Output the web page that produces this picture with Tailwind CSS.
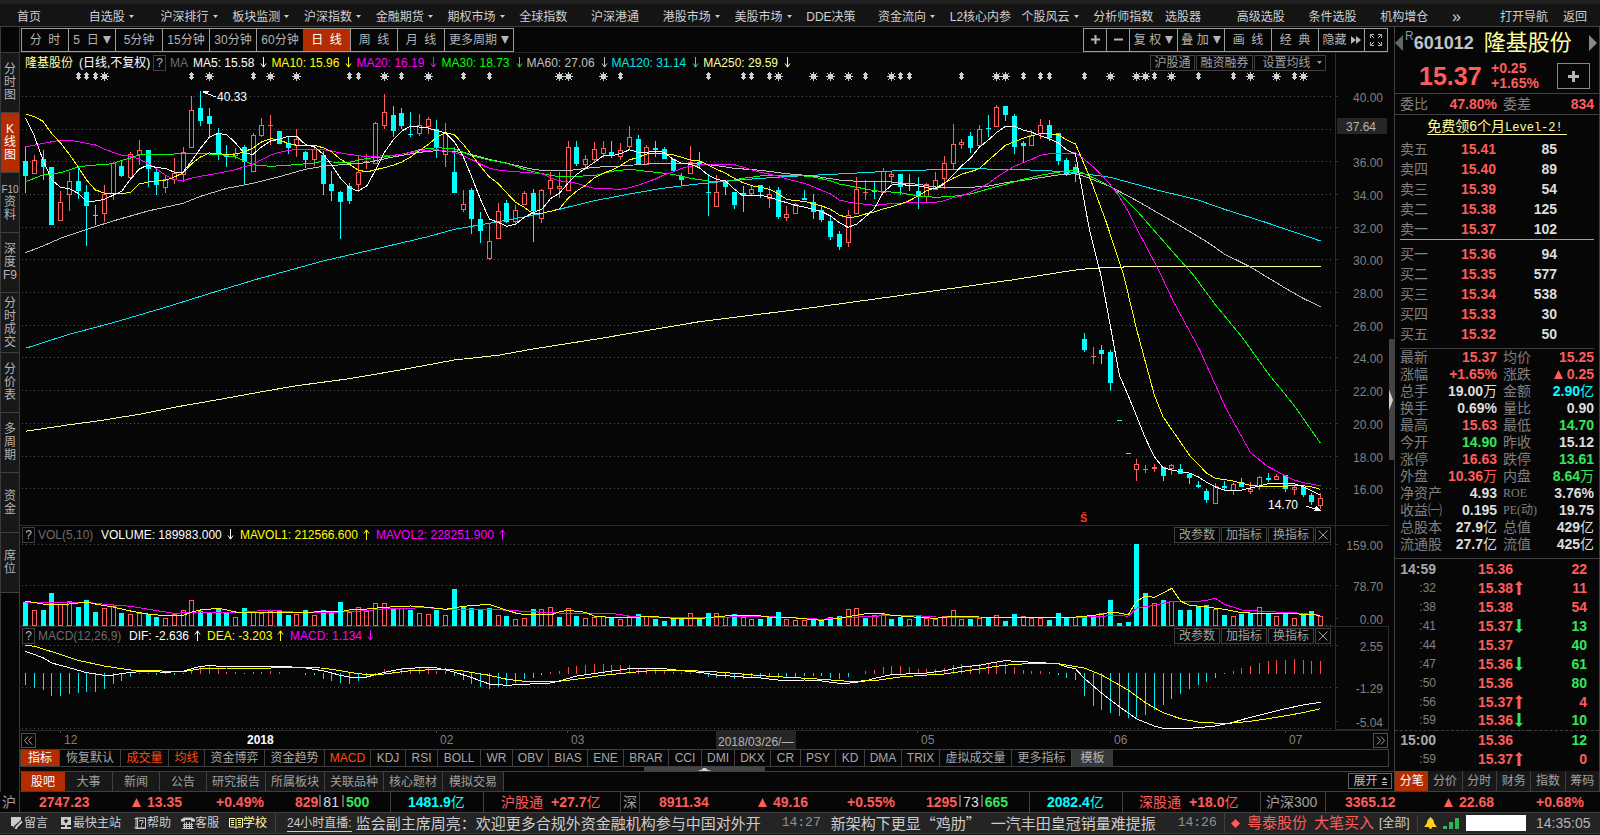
<!DOCTYPE html>
<html lang="zh-CN">
<head>
<meta charset="utf-8">
<title>隆基股份 601012</title>
<script src="https://cdn.jsdelivr.net/npm/@tailwindcss/browser@4"></script>
</head>
<body class="bg-[#060606] text-[#b4b4b4] font-['Liberation_Sans','Noto_Sans_CJK_SC',sans-serif] text-[12px] leading-[16px] overflow-hidden">
<svg class="hidden">
  <symbol id="dn" viewBox="0 0 7 11"><path d="M3.5 0V10M1 6.5 3.5 10.2 6 6.5" fill="none" stroke="currentColor"/></symbol>
  <symbol id="up" viewBox="0 0 7 11"><path d="M3.5 11V1M1 4.5 3.5 .8 6 4.5" fill="none" stroke="currentColor"/></symbol>
  <symbol id="caret" viewBox="0 0 5 3"><path d="M0 0H5L2.5 3Z" fill="currentColor"/></symbol>
  <symbol id="tri" viewBox="0 0 9 9"><path d="M0 0H9L4.500 9Z" fill="currentColor"/></symbol>
  <symbol id="rise" viewBox="0 0 9 9"><path d="M0 9H9L4.500 0Z" fill="currentColor"/></symbol>
</svg>
<div class="flex min-h-screen flex-col">
  <div class="h-1 bg-[#222222]"></div>
  <nav class="flex h-[23px] items-center border-b border-[#404040] bg-[#141414] pl-[17px] pt-[3px] text-[#cfcfcf] whitespace-nowrap">
    <div id="menu" class="flex min-w-0 flex-1"></div>
    <button class="w-12 text-left text-[16px]">»</button>
    <a href="#" class="w-[63px]">打开导航</a>
    <a href="#" class="w-[37px]">返回</a>
  </nav>

  <main class="flex h-[744px]">
    <aside class="w-5 shrink-0 border-x border-[#3a3a3a] pt-[25px]">
      <div id="side" class="flex flex-col border-t border-[#3a3a3a] text-center text-[12px] leading-[13px]"></div>
    </aside>

    <section class="flex min-w-0 flex-1 flex-col">
      <div class="flex h-[26px] shrink-0 items-center border-b border-[#222222] pl-px pr-px whitespace-nowrap">
        <div id="periods" class="flex h-6 border border-[#9c9c9c]"></div>
        <div class="ml-auto flex h-6 divide-x divide-[#9c9c9c] border border-[#9c9c9c]">
          <button class="flex w-[23px] items-center justify-center" aria-label="放大"><svg class="size-[9px]" viewBox="0 0 9 9"><path d="M0 4.500H9M4.500 0V9" stroke="#b4b4b4" stroke-width="2"/></svg></button>
          <button class="flex w-[23px] items-center justify-center" aria-label="缩小"><svg class="size-[9px]" viewBox="0 0 9 9"><path d="M0 4.500H9" stroke="#b4b4b4" stroke-width="2"/></svg></button>
          <button class="flex w-12 items-center justify-center gap-1">复&nbsp;权<svg class="size-2"><use href="#tri"/></svg></button>
          <button class="flex w-[47px] items-center justify-center gap-1">叠&nbsp;加<svg class="size-2"><use href="#tri"/></svg></button>
          <button class="w-[47px]">画&nbsp; 线</button>
          <button class="w-[47px]">经&nbsp; 典</button>
          <button class="flex w-[46px] items-center justify-center gap-1">隐藏<svg class="h-2 w-[10px]" viewBox="0 0 10 8"><path d="M0 0 5 4 0 8ZM5 0 10 4 5 8Z" fill="#b4b4b4"/></svg></button>
          <button class="flex w-[22px] items-center justify-center" aria-label="全屏"><svg class="size-3" viewBox="0 0 12 12"><path d="M.5 4V.5H4M8 .5H11.500V4M11.500 8V11.500H8M4 11.500H.5V8M1 1 4 4M11 1 8 4M11 11 8 8M1 11 4 8" fill="none" stroke="#b4b4b4"/></svg></button>
        </div>
      </div>

      <!-- price panel -->
      <div class="flex h-[473px] shrink-0 border-b border-[#2a2a2a]">
        <div class="flex min-w-0 flex-1 flex-col">
          <div class="flex h-[19px] items-center pl-[5px] pr-[9px] whitespace-nowrap">
            <h1 class="w-[54px] text-[#ffffa0]">隆基股份</h1><span class="w-[74px] text-white">(日线,不复权)</span>
            <button class="mr-1 h-4 w-[13px] border border-[#404040] leading-[14px]">?</button><span class="w-[23px] text-[#6c6c6c]">MA</span>
            <div id="ma" class="flex gap-1"></div>
            <div class="ml-auto flex gap-px text-[#a0a0a0]">
              <button class="h-4 w-[45px] border border-[#404040] leading-[14px]">沪股通</button>
              <button class="h-4 w-[57px] border border-[#404040] leading-[14px]">融资融券</button>
              <button class="flex h-4 w-[72px] items-center justify-center gap-1.5 border border-[#404040] pl-1 leading-[14px]">设置均线<svg class="h-[3px] w-[5px]"><use href="#caret"/></svg></button>
            </div>
          </div>
          <svg id="price" class="h-[453px] w-full" viewBox="20 72 1315 453" preserveAspectRatio="none" shape-rendering="crispEdges"></svg>
        </div>
        <svg id="priceAxis" class="h-full w-[54px] border-l border-[#2a2a2a]" viewBox="1336 53 53 472"></svg>
      </div>

      <!-- volume panel -->
      <div class="flex h-[101px] shrink-0 border-b border-[#2a2a2a]">
        <div class="flex min-w-0 flex-1 flex-col">
          <div class="flex h-[17px] items-center pl-[2px] pr-1 whitespace-nowrap">
            <button class="mr-[3px] h-4 w-[13px] border border-[#404040] leading-[14px]">?</button><span class="w-[63px] text-[#6c6c6c]">VOL(5,10)</span>
            <span class="flex items-center gap-[5px] text-white w-[139px]">VOLUME: 189983.000<svg class="h-[11px] w-[7px]"><use href="#dn"/></svg></span>
            <span class="flex items-center gap-[5px] text-[#ffff00] w-[136px]">MAVOL1: 212566.600<svg class="h-[11px] w-[7px]"><use href="#up"/></svg></span>
            <span class="flex items-center gap-[5px] text-[#ff00ff]">MAVOL2: 228251.900<svg class="h-[11px] w-[7px]"><use href="#up"/></svg></span>
            <div class="ml-auto flex gap-px text-[#a0a0a0]">
              <button class="h-4 w-[46px] border border-[#404040] leading-[14px]">改参数</button>
              <button class="h-4 w-[46px] border border-[#404040] leading-[14px]">加指标</button>
              <button class="h-4 w-[46px] border border-[#404040] leading-[14px]">换指标</button>
              <button class="flex h-4 w-4 items-center justify-center border border-[#404040]" aria-label="关闭"><svg class="size-[10px]" viewBox="0 0 10 10"><path d="M.5.5 9.500 9.500M9.500.5.5 9.500" stroke="#a0a0a0"/></svg></button>
            </div>
          </div>
          <svg id="vol" class="h-[83px] w-full" viewBox="20 543 1315 83" preserveAspectRatio="none" shape-rendering="crispEdges"></svg>
        </div>
        <svg id="volAxis" class="h-full w-[54px] border-l border-[#2a2a2a]" viewBox="1336 526 53 100"></svg>
      </div>

      <!-- MACD panel -->
      <div class="flex h-[104px] shrink-0 border-b border-[#2a2a2a]">
        <div class="flex min-w-0 flex-1 flex-col">
          <div class="flex h-[17px] items-center pl-[2px] pr-1 whitespace-nowrap">
            <button class="mr-[3px] h-4 w-[13px] border border-[#404040] leading-[14px]">?</button><span class="w-[91px] text-[#6c6c6c]">MACD(12,26,9)</span>
            <span class="flex items-center gap-[5px] text-white w-[78px]">DIF: -2.636<svg class="h-[11px] w-[7px]"><use href="#up"/></svg></span>
            <span class="flex items-center gap-[5px] text-[#ffff00] w-[83px]">DEA: -3.203<svg class="h-[11px] w-[7px]"><use href="#up"/></svg></span>
            <span class="flex items-center gap-[5px] text-[#ff00ff]">MACD: 1.134<svg class="h-[11px] w-[7px]"><use href="#dn"/></svg></span>
            <div class="ml-auto flex gap-px text-[#a0a0a0]">
              <button class="h-4 w-[46px] border border-[#404040] leading-[14px]">改参数</button>
              <button class="h-4 w-[46px] border border-[#404040] leading-[14px]">加指标</button>
              <button class="h-4 w-[46px] border border-[#404040] leading-[14px]">换指标</button>
              <button class="flex h-4 w-4 items-center justify-center border border-[#404040]" aria-label="关闭"><svg class="size-[10px]" viewBox="0 0 10 10"><path d="M.5.5 9.500 9.500M9.500.5.5 9.500" stroke="#a0a0a0"/></svg></button>
            </div>
          </div>
          <svg id="macd" class="h-[86px] w-full" viewBox="20 644 1315 86" preserveAspectRatio="none" shape-rendering="crispEdges"></svg>
        </div>
        <svg id="macdAxis" class="h-full w-[54px] border border-t-0 border-[#2a2a2a]" viewBox="1336 627 52 102"></svg>
      </div>

      <div class="flex h-[18px] shrink-0 items-center">
        <button class="ml-px flex h-[15px] w-[15px] shrink-0 items-center justify-center border border-[#505050]" aria-label="向左"><svg class="size-[9px]" viewBox="0 0 9 9"><path d="M4 .5.5 4.500 4 8.500M8 .5 4.500 4.500 8 8.500" fill="none" stroke="#a0a0a0"/></svg></button>
        <svg id="dates" class="h-[18px] min-w-0 flex-1" viewBox="36 731 1337 18" preserveAspectRatio="none"></svg>
        <button class="mr-px flex h-[15px] w-[15px] shrink-0 items-center justify-center border border-[#505050]" aria-label="向右"><svg class="size-[9px]" viewBox="0 0 9 9"><path d="M1 .5 4.500 4.500 1 8.500M5 .5 8.500 4.500 5 8.500" fill="none" stroke="#a0a0a0"/></svg></button>
      </div>
      <div id="indicators" class="flex h-[18px] shrink-0 divide-x divide-[#404040] border border-[#404040] whitespace-nowrap"></div>
      <div class="flex h-[4px] shrink-0 justify-center">
        <button class="flex h-[5px] w-[121px] items-end justify-center bg-[#444444]" aria-label="调整高度"><svg class="h-1 w-[19px]" viewBox="0 0 19 4"><path d="M0 4 7 1.500 8 0H11L12 1.500 19 4Z" fill="#d0d0d0"/></svg></button>
      </div>
    </section>

    <div class="relative w-[5px] shrink-0"><button class="absolute top-[312px] flex h-[121px] w-[5px] items-center bg-[#444444]" aria-label="收起侧栏"><svg class="h-5 w-1" viewBox="0 0 4 20"><path d="M0 0 1 2 4 10 1 18 0 20Z" fill="#d0d0d0"/></svg></button></div>

    <aside class="w-[206px] shrink-0 border-x border-[#404040] text-[14px]">
      <div class="h-[67px] border-b border-[#404040]">
        <div class="flex h-8 items-center">
          <svg class="h-4 w-2" viewBox="0 0 8 16"><path d="M8 0V16L0 8Z" fill="#666666"/></svg>
          <span class="ml-[2px] self-start pt-px text-[12px] text-[#8a9aaa]">R</span>
          <span class="w-[70px] text-[18px] font-bold text-[#c0c4c8]">601012</span>
          <h2 class="flex-1 text-[22px] leading-8 text-[#ffffa0] whitespace-nowrap">隆基股份</h2>
          <svg class="mr-[2px] h-4 w-2" viewBox="0 0 8 16"><path d="M0 0V16L8 8Z" fill="#888888"/></svg>
        </div>
        <div class="flex h-[34px] items-center pl-6 font-bold text-[#ff5c5c]">
          <span class="w-[72px] text-[25px]">15.37</span>
          <span class="w-[66px] text-[14px] leading-[15px]">+0.25<br>+1.65%</span>
          <button class="flex h-[26px] w-[33px] items-center justify-center border border-[#8a8a8a]" aria-label="加自选"><svg class="size-[11px]" viewBox="0 0 11 11"><path d="M0 5.500H11M5.500 0V11" stroke="#b4b4b4" stroke-width="3"/></svg></button>
        </div>
      </div>
      <div class="flex h-[21px] items-center border-b border-[#404040] pr-[5px] pl-[5px] text-[#808080]">
        <span class="w-9">委比</span><b class="w-[61px] text-right text-[#ff5c5c]">47.80%</b><span class="ml-1.5">委差</span><b class="ml-auto text-[#ff5c5c]">834</b>
      </div>
      <p class="h-[24px] text-center leading-[22px] text-[#ffffa0]"><a href="#" class="border-b border-[#ffffa0] pr-1">免费领6个月<span class="font-['Liberation_Mono'] text-[12px]">Level-2!</span></a></p>
      <div class="px-[5px]">
        <table class="w-full border-b border-[#a0a0a0]"><tbody id="asks"></tbody></table>
        <table class="mt-1 w-full"><tbody id="bids"></tbody></table>
        <table class="mt-1 w-full border-t border-[#404040]"><tbody id="stats"></tbody></table>
      </div>
      <div class="mt-1.5 border-t border-[#404040]">
        <table class="w-full"><tbody id="ticks"></tbody></table>
      </div>
    </aside>
  </main>

  <div class="flex h-[21px] whitespace-nowrap">
    <div class="w-5 border-x border-[#3a3a3a]"></div>
    <div id="tabs" class="flex flex-1 border-t border-b border-[#404040] pl-px text-[#a0a0a0]"></div>
    <div class="w-[46px] border-y border-[#404040] pt-px"><button class="flex h-4 w-[44px] items-center justify-center gap-1 border border-[#606060] text-[#c0c0c0]">展开<svg class="h-2 w-[5px]" viewBox="0 0 5 8"><path d="M0 3H5L2.500 0ZM0 5H5V6H0ZM0 7H5V8H0Z" fill="#c0c0c0"/></svg></button></div>
    <div id="rtabs" class="flex w-[206px] border-b border-l border-[#404040] text-[#a0a0a0]"></div>
  </div>

  <div class="flex h-[21px] items-center divide-x divide-[#404040] border-b border-[#404040] text-[14px] leading-5 font-bold text-[#ff5c5c] whitespace-nowrap">
    <div class="basis-[20px] grow-0 shrink-0 pl-[2px] font-normal text-[#a0a0a0]">沪</div>
    <div class="flex grow basis-[371px] items-center pl-[19px]"><span class="w-[93px]">2747.23</span><span class="flex w-[84px] items-center gap-1.5"><svg class="size-[9px]"><use href="#rise"/></svg>13.35</span><span class="w-[79px]">+0.49%</span><span>829<i class="mx-px inline-block h-3 w-[2px] bg-[#606060]"></i><i class="mx-px font-normal not-italic text-[#dddddd]">81</i><i class="mx-[2px] inline-block h-3 w-[2px] bg-[#606060]"></i><i class="not-italic text-[#32e65a]">500</i></span></div>
    <div class="grow basis-[93px] pl-[17px] text-[#00ffff]">1481.9<span class="font-normal">亿</span></div>
    <div class="grow basis-[137px] pl-[17px]"><span class="mr-2 font-normal">沪股通</span>+27.7<span class="font-normal">亿</span></div>
    <div class="basis-[19px] grow-0 shrink-0 pl-[2px] font-normal text-[#a0a0a0]">深</div>
    <div class="flex grow basis-[390px] items-center pl-[19px]"><span class="w-[99px]">8911.34</span><span class="flex w-[89px] items-center gap-1.5"><svg class="size-[9px]"><use href="#rise"/></svg>49.16</span><span class="w-[79px]">+0.55%</span><span>1295<i class="mx-[2px] inline-block h-3 w-[2px] bg-[#606060]"></i><i class="font-normal not-italic text-[#dddddd]">73</i><i class="mx-[2px] inline-block h-3 w-[2px] bg-[#606060]"></i><i class="not-italic text-[#32e65a]">665</i></span></div>
    <div class="grow basis-[93px] pl-[17px] text-[#00ffff]">2082.4<span class="font-normal">亿</span></div>
    <div class="grow basis-[138px] pl-[16px]"><span class="mr-2 font-normal">深股通</span>+18.0<span class="font-normal">亿</span></div>
    <div class="grow basis-[65px] pl-[5px] font-normal text-[#a0a0a0]">沪深300</div>
    <div class="flex grow basis-[274px] items-center pl-[19px]"><span class="w-[99px]">3365.12</span><span class="flex w-[92px] items-center gap-1.5"><svg class="size-[9px]"><use href="#rise"/></svg>22.68</span><span>+0.68%</span></div>
  </div>

  <footer class="flex h-[21px] items-center border-b border-[#3a3a3a] bg-[#242424] pl-[10px] text-[#cccccc] whitespace-nowrap">
    <a href="#" class="flex w-[50px] items-center gap-px"><svg class="h-3 w-[13px]" viewBox="0 0 13 12"><path d="M1 0H11V3L4 9V11L3 9H1Z" fill="#ccc"/><path d="M6 10.500 12 4.500M5 11.500 7 11" stroke="#ccc" stroke-width="2"/></svg>留言</a>
    <a href="#" class="flex w-[74px] items-center gap-px"><svg class="size-3" viewBox="0 0 12 12"><path d="M1 0H11V8H7V10H11V12H1V10H5V8H1Z" fill="#ccc"/><path d="M6 1.500V5M4 3 6 6 8 3" stroke="#242424" fill="#242424"/></svg>最快主站</a>
    <a href="#" class="flex w-[47px] items-center gap-px"><svg class="size-3" viewBox="0 0 12 12"><path d="M2 1H11.500V11.500H2ZM3.500 1V11M.500 1.500H3M.500 11H11" fill="none" stroke="#ccc"/><path d="M5.500 4.500V3.500H9V5.500L7.500 6.500V8M7.500 9V10" fill="none" stroke="#ccc"/></svg>帮助</a>
    <a href="#" class="flex w-[48px] items-center"><svg class="h-3 w-[14px]" viewBox="0 0 14 12"><path d="M0 4.500V2.500L3 .5H11L14 2.500V4.500H10V3H4V4.500Z" fill="#ccc"/><path d="M3.500 5.500V12M5.500 5V12M8.500 5V12M10.500 5.500V12M2 7.500H12M2 9.500H12M1.500 11.500H12.500" stroke="#ccc"/></svg>客服</a>
    <a href="#" class="flex w-[46px] items-center text-[#ffffa0]"><svg class="h-3 w-[14px]" viewBox="0 0 14 12"><path d="M.5 1.500H6L7 2.500 8 1.500H13.500V10H8.500L7 11.500 5.500 10H.500ZM7 2.500V11M2 3.500H5M2 5.500H5M2 7.500H5M9 3.500H12M9 5.500H12M9 7.500H12" fill="none" stroke="#ffffa0"/></svg>学校</a>
    <div class="flex min-w-0 flex-1 items-center border-l border-[#404040] pl-[11px]">
      <a href="#" class="mr-1 shrink-0 border-b border-[#cccccc] leading-[16px]">24小时直播:</a>
      <p class="flex min-w-0 flex-1 items-center overflow-hidden font-['Noto_Sans_CJK_SC',sans-serif] text-[15px] leading-5"><span class="w-[426px] shrink-0">监会副主席周亮：欢迎更多合规外资金融机构参与中国对外开</span><time class="w-[49px] shrink-0 font-['Liberation_Mono'] text-[13px] text-[#909090]">14:27</time><span class="w-[160px] shrink-0">新架构下更显“鸡肋”</span><span class="w-[187px] shrink-0">一汽丰田皇冠销量难提振</span><time class="font-['Liberation_Mono'] text-[13px] text-[#909090]">14:26</time></p>
    </div>
    <div class="flex w-[193px] items-center border-l border-[#404040] pl-[6px] text-[15px] leading-5 text-[#ff5c5c]"><svg class="mr-[7px] size-[9px]" viewBox="0 0 9 9"><path d="M4.500 0 9 4.500 4.500 9 0 4.500Z" fill="#ff5c5c"/></svg><span class="w-[67px]">粤泰股份</span><span class="w-[65px]">大笔买入</span><span class="text-[12px] text-[#cccccc]">[全部]</span></div>
    <div class="flex w-[183px] items-center border-l border-[#404040] pl-[6px]">
      <svg class="h-3 w-[13px]" viewBox="0 0 13 12"><path d="M6.500 0 8 1.500Q10 2.500 10 6L12.500 9.500V10H8Q8 12 6.500 12T5 10H.500V9.500L3 6Q3 2.500 5 1.500Z" fill="#ffd21e"/></svg>
      <svg class="ml-1.5 h-[11px] w-[17px]" viewBox="0 0 17 11"><path d="M0 8H4V11H0ZM6 4H10V11H6ZM12 0H16V11H12Z" fill="#2fb457"/></svg>
      <input type="text" aria-label="搜索" class="ml-1.5 h-4 w-[60px] bg-white px-1 text-black">
      <time class="ml-[10px] text-[14px] text-[#b4b4b4]">14:35:05</time>
    </div>
  </footer>
  <div class="flex-1 bg-[#101318]"></div>
</div>

<script>
const $ = id => document.getElementById(id);
const RED = '#ff5c5c', CYAN = '#00ffff', GRID = '#555555';

// ---- navigation, tabs ----
const caret = '<svg class="h-[3px] w-[5px]"><use href="#caret"/></svg>';
$('menu').innerHTML = '首页,自选股+,沪深排行+,板块监测+,沪深指数+,金融期货+,期权市场+,全球指数,沪深港通,港股市场+,美股市场+,DDE决策,资金流向+,L2核心内参,个股风云+,分析师指数,选股器,高级选股,条件选股,机构增仓'
  .split(',').map(t => `<a href="#" class="flex flex-1 basis-0 items-center gap-1">${t.replace('+', '')}${t.includes('+') ? caret : ''}</a>`).join('');
$('side').innerHTML = ['分/时/图', 'K/线/图', '<span class="text-[10px]">F10</span>/资/料', '深/度/F9', '分/时/成/交', '分/价/表', '多/周/期', '资/金', '席/位'].map((t, i) =>
  `<button class="${i === 1 ? 'h-[60px] border-b border-[#404040] bg-[#b42d00] text-white' : 'h-[60px] border-b border-[#404040] bg-[#181818]'}">${t.replace(/\/(?!span)/g, '<br>')}</button>`).join('');
const tri = '<svg class="size-2"><use href="#tri"/></svg>';
$('periods').innerHTML = ['分&nbsp; 时', '5&nbsp; 日' + tri, '5分钟', '15分钟', '30分钟', '60分钟', '日&nbsp; 线', '周&nbsp; 线', '月&nbsp; 线', '更多周期' + tri].map((t, i) =>
  `<button class="${i === 6 ? 'flex w-[47px] items-center justify-center gap-1 bg-[#b42d00] text-white' : i === 9 ? 'flex w-[69px] items-center justify-center gap-1 border-l border-[#9c9c9c]' : i === 0 ? 'w-[46px]' : 'flex w-[47px] items-center justify-center gap-1 border-l border-[#9c9c9c]'}">${t}</button>`).join('');
$('ma').innerHTML = [['MA5: 15.58', '#ffffff'], ['MA10: 15.96', '#ffff00'], ['MA20: 16.19', '#ff00ff'], ['MA30: 18.73', '#00ff00'], ['MA60: 27.06', '#c0c0c0'], ['MA120: 31.14', '#00e5ee'], ['MA250: 29.59', '#ffffa0']]
  .map(([t, c]) => `<span class="flex items-center gap-1.5" style="color:${c}">${t}<svg class="h-[11px] w-[7px]"><use href="#dn"/></svg></span>`).join('');
const ind = [['指标',39],['恢复默认',61],['成交量',48],['均线',36],['资金博弈',60],['资金趋势',60],['MACD',46],['KDJ',35],['RSI',32],['BOLL',43],['WR',32],['OBV',36],['BIAS',39],['ENE',36],['BRAR',45],['CCI',33],['DMI',33],['DKX',36],['CR',30],['PSY',35],['KD',29],['DMA',37],['TRIX',38],['虚拟成交量',72],['更多指标',60],['模板',41]];
$('indicators').innerHTML = ind.map(([t, w], i) =>
  `<button class="${i === 0 ? 'bg-[#b42d00] text-white' : [2, 3, 6].includes(i) ? 'text-[#ff4a14]' : i === 25 ? 'bg-[#383838]' : 'text-[#a8a8a8]'}" style="width:${w}px">${t}</button>`).join('');
$('tabs').innerHTML = [['股吧',44],['大事',48],['新闻',47],['公告',47],['研究报告',59],['所属板块',59],['关联品种',59],['核心题材',59],['模拟交易',61]].map(([t, w], i) =>
  `<button class="${i ? 'border-r border-[#404040] bg-[#181818]' : 'bg-[#b42d00] text-white'}" style="width:${w}px">${t}</button>`).join('');
$('rtabs').innerHTML = ['分笔', '分价', '分时', '财务', '指数', '筹码'].map((t, i) =>
  `<button class="${i ? 'flex-1 border-r border-[#404040] bg-[#181818]' : 'flex-1 bg-[#b42d00] text-white'}">${t}</button>`).join('');

// ---- quote tables ----
const book = rows => rows.map(([n, p, q]) => `<tr class="h-5"><th scope="row" class="w-10 text-left font-normal text-[#808080]">${n}</th><td class="w-14 text-right font-bold text-[#ff5c5c]">${p}</td><td class="w-[61px] text-right font-bold text-[#dddddd]">${q}</td><td></td></tr>`).join('');
$('asks').innerHTML = book([['卖五','15.41',85],['卖四','15.40',89],['卖三','15.39',54],['卖二','15.38',125],['卖一','15.37',102]]);
$('bids').innerHTML = book([['买一','15.36',94],['买二','15.35',577],['买三','15.34',538],['买四','15.33',30],['买五','15.32',50]]);
const cls = { r: 'text-right font-bold text-[#ff5c5c]', g: 'text-right font-bold text-[#32e65a]', w: 'text-right font-bold text-[#dddddd]', c: 'text-right font-bold text-[#00ffff]' };
const unit = v => v.replace(/[万亿]/, '<span class="font-normal">$&</span>').replace('▲', '<svg class="mr-1 inline size-[9px]"><use href="#rise"/></svg>');
$('stats').innerHTML = [['最新','15.37','r','均价','15.25','r'],['涨幅','+1.65%','r','涨跌','▲0.25','r'],['总手','19.00万','w','金额','2.90亿','c'],['换手','0.69%','w','量比','0.90','w'],['最高','15.63','r','最低','14.70','g'],['今开','14.90','g','昨收','15.12','w'],['涨停','16.63','r','跌停','13.61','g'],['外盘','10.36万','r','内盘','8.64万','g'],['净资产','4.93','w','ROE','3.76%','w'],['收益㈠','0.195','w','PE(动)','19.75','w'],['总股本','27.9亿','w','总值','429亿','w'],['流通股','27.7亿','w','流值','425亿','w']]
  .map(([a, b, c, d, e, f]) => `<tr class="h-[17px] whitespace-nowrap"><th scope="row" class="w-10 text-left font-normal text-[#808080]">${a}</th><td class="w-[55px] ${cls[c]}">${unit(b)}</td><th scope="row" class="w-11 pl-1.5 text-left font-normal text-[#808080]">${/[A-Z]/.test(d) ? `<span class="font-['Liberation_Serif','Noto_Sans_CJK_SC'] text-[12px]">${d}</span>` : d}</th><td class="${cls[f]}">${unit(e)}</td></tr>`).join('');
const tick = { u: '<svg class="h-[14px] w-2" viewBox="0 0 8 14"><path d="M4 0 8 4H5.500V14H2.500V4H0Z" fill="#ff5c5c"/></svg>', d: '<svg class="h-[14px] w-2" viewBox="0 0 8 14"><path d="M4 14 8 10H5.500V0H2.500V10H0Z" fill="#32e65a"/></svg>', '': '' };
$('ticks').innerHTML = [['14:59','15.36','',22,'r'],[':32','15.38','u',11,'r'],[':38','15.38','',54,'r'],[':41','15.37','d',13,'g'],[':44','15.37','',40,'g'],[':47','15.36','d',61,'g'],[':50','15.36','',80,'g'],[':56','15.37','u',4,'r'],[':59','15.36','d',10,'g'],['15:00','15.36','',12,'g'],[':59','15.37','u',0,'r']]
  .map(([t, p, a, v, c], i) => `<tr class="${i === 9 ? 'h-[19px] border-t border-dashed border-[#404040]' : 'h-[19px]'}"><td class="${t.length > 3 ? 'w-[41px] text-right font-bold text-[#a8a8a8]' : 'w-[41px] text-right text-[12px] text-[#808080]'}">${t}</td><td class="w-[77px] text-right font-bold text-[#ff5c5c]">${p}</td><td class="w-4 pl-[2px]">${tick[a]}</td><td class="pr-3 ${cls[c]}">${v}</td></tr>`).join('');

// ---- charts: data y values are in thirds of a pixel ----
const X = i => Math.round(25 + 8.75 * i);
const Y = v => Math.round(v / 3);
const rect = (x, y, w, h, c) => `<rect x="${x}" y="${y}" width="${w}" height="${h}" fill="${c}"/>`;
const grid = ys => ys.map(y => `<line x1="22" x2="1332" y1="${y + .5}" y2="${y + .5}" stroke="${GRID}" stroke-dasharray="1 3"/>`).join('');
const box = (i, top, bot, red) => {
  const h = Math.max(1, bot - top), x = X(i) - 2;
  if (!red || h < 3) return rect(x, top, 5, h, red ? RED : CYAN);
  return `<rect x="${x + .5}" y="${top + .5}" width="4" height="${h - 1}" fill="none" stroke="${RED}"/>`;
};
const line = (pts, c, off = 0) => {
  const a = pts.trim().split(/\s+/).map(p => p.split(',').map(Number));
  return `<polyline fill="none" stroke="${c}" points="${a.map(([i, y]) => (25.5 + 8.75 * i).toFixed(1) + ',' + (off + y / 3).toFixed(1)).join(' ')}"/>`;
};

// colour high bodyTop bodyBottom low
const candles = `c438 483 527 578|r465 481 523 523|c450 477 500 540|c501 501 675 675|r573 607 664 664|r516 544 586 632|c505 543 572 597|c555 576 618 738|c615 645 648 675|r555 583 643 665|r487 490 582 600|c480 499 528 531|r456 461 535 535|r420 451 466 494|c450 450 507 560|c508 516 555 585|r528 538 563 578|r474 520 540 551|r441 455 526 545|r288 331 443 443|c273 324 363 377|c324 348 372 411|c384 399 465 480|c435 461 471 501|r444 458 469 477|c435 441 486 551|r399 406 515 515|r354 376 407 411|r345 376 379 434|c393 393 431 431|c408 428 444 461|r387 416 437 471|c453 456 480 504|r435 447 481 497|c453 465 552 585|c513 552 573 603|c573 576 606 717|c549 558 603 612|r465 517 554 575|r462 484 487 507|r366 370 491 491|r282 337 377 386|c318 345 393 411|c324 339 378 386|c336 402 405 411|r342 376 403 407|r351 358 382 402|c360 387 441 474|r370 400 464 500|c441 516 579 579|r570 613 629 636|c564 570 657 702|c636 657 693 729|r669 724 776 780|r609 634 716 716|c600 609 666 670|r615 631 665 672|r573 580 616 616|c567 579 634 726|r567 571 656 668|r516 541 566 585|r516 559 566 594|r423 442 572 572|c423 441 492 498|r465 478 496 504|r426 448 479 486|r423 445 461 475|c423 456 468 475|r429 451 472 479|r378 412 440 447|c405 417 492 492|r435 442 494 494|c423 444 450 470|c441 447 477 477|c477 477 513 513|c519 528 540 558|r438 487 521 521|c456 486 495 508|c522 576 579 648|r525 577 620 620|c540 543 560 585|c576 576 615 627|c558 580 587 636|r555 568 581 585|c555 555 576 594|r558 583 598 624|c561 570 651 657|r618 643 653 662|r610 613 641 641|c570 594 600 600|c582 606 636 657|c618 630 660 666|c648 663 711 720|c693 702 741 750|r630 646 728 741|r531 568 641 641|r540 576 579 600|c546 572 576 597|r504 514 578 578|r514 523 530 552|c522 522 561 585|c522 554 557 573|c531 573 588 627|r549 553 590 606|r516 541 569 569|r468 490 536 566|r372 433 491 507|r417 427 434 447|c396 408 444 459|r375 388 437 437|c345 384 387 411|r315 322 380 380|c318 318 345 363|c342 348 441 462|c423 429 438 486|r390 405 437 437|r357 376 402 417|c360 375 414 423|c399 399 483 495|c474 480 521 527|c492 501 519 546|c999 1017 1050 1056|r1041 1067 1070 1092|c1035 1050 1062 1092|c1050 1056 1149 1173|c1260 1260 1263 1263|c1359 1359 1362 1362|r1377 1393 1409 1443|r1395 1408 1411 1419|r1392 1402 1408 1416|c1401 1401 1428 1443|r1392 1396 1408 1425|c1392 1407 1422 1422|c1422 1422 1434 1452|c1443 1455 1461 1465|c1467 1473 1500 1509|r1449 1459 1511 1511|c1443 1458 1464 1473|r1449 1453 1474 1485|c1434 1446 1461 1461|r1446 1468 1475 1482|r1428 1432 1460 1470|c1419 1434 1440 1446|r1422 1429 1439 1439|c1425 1425 1467 1476|r1455 1462 1469 1485|c1458 1462 1485 1491|c1479 1485 1506 1515|r1480 1495 1517 1527`
  .split('|').map(s => [s[0] === 'r', ...s.slice(1).split(' ').map(Number)]);

let p = grid([96, 129, 161, 194, 227, 259, 292, 325, 357, 390, 423, 456, 488]);
candles.forEach(([red, h, t, b, l], i) => {
  const c = red ? RED : CYAN, x = X(i);
  if (t > h) p += rect(x, Y(h), 1, Y(t) - Y(h), c);
  if (l > b) p += rect(x, Y(b), 1, Y(l) - Y(b), c);
  p += box(i, Y(t), Y(b), red);
});
p += line('0,1294 5,1274 8,1264 13,1243 18,1217 22,1199 27,1175 31,1157 37,1136 43,1109 49,1080 54,1066 58,1047 65.5,1016 73.6,980 77,965 89,926 99,890 103.5,874 112.7,840 119,814 120.6,808 124,802 129,799 148,799', '#ffffa0');
p += line('0,1045 5,1003 10,968 16,922 21.5,877 26.4,838 34,783 40,747 46,710 49,688 53,670 58,646 61,628 64.7,604 69,582 72.5,566 76.5,553 81,541 86.7,530 94.5,520 99,513 108,506 114,509 119,515 120,518 124,532 129,568 134,600 137,628 141.7,667 148,723', '#00e5ee');
p += line('0,758 2,738 4,715 7,688 10,663 14,633 18,610 20,589 23,565 26,550 29,530 32,508 34,499 37,492 39,488 42,471 45,457 47,452 50,457 53,478 55,490 58,508 59,511 62,512 65,502 68,498 71,492 74,490 77,491 79,497 81,505 84,511 87,521 90,528 93,540 95,544 99,546 102,553 104,561 107,563 110,559 112,548 115,537 118,525 120,521 121,529 124,560 127,602 132,678 135,725 137,762 140,801 142,833 144,865 146,895 148,920', '#c0c0c0');
p += line('0,545 1,535 2,525 4,518 5,510 6,501 7,497 10,491 11,481 12,474 13,465 14,463 20,461 22,463 24,471 25,483 26,494 28,499 30,496 33,489 34,483 35,486 37,487 38,481 39,475 41,471 43,462 44,457 45,449 47,443 49,446 51,467 53,480 55,490 57,508 59,521 61,530 65,527 67,514 69,508 71,514 74,523 76,535 78,543 80,545 81,540 82,535 84,528 86,526 89,528 90,531 92,542 93,552 95,562 97,572 100,578 102,588 104,592 106,589 108,582 110,567 112,553 114,538 116,526 118,517 120,510 121,521 122,533 123,546 124,560 125,580 126,606 127,632 129,692 131,752 133.5,826 136,915 139,1010 142,1120 145,1217 148,1330', '#00ff00');
p += line('0,441 2,430 4,421 5,421 6,425 8,435 9,447 10,457 11,466 12,469 13,477 14,490 15,507 16,526 17,539 18,542 19,534 21,524 22,520 24,509 25,500 26,493 27,479 28,466 29,457 30,452 31,448 34,449 35,453 36,459 37,463 38,467 39,470 42,466 44,458 45,452 47,449 49,457 50,467 51,479 52,492 53,505 54,510 55,513 57,517 59,521 60,533 61,542 63,550 64,558 65,565 68,568 69,563 70,556 71,546 72,537 73,524 74,516 75,505 76,499 77,495 78,493 81,494 82,501 83,510 84,517 86,528 87,537 89,550 90,560 92,582 93,600 94,606 95,610 97,616 98,614 99,610 102,608 104,607 105,602 106,593 107,588 108,577 109,565 110,551 111,531 112,515 113,499 114,488 115,478 116,466 117,461 119,461 120,458 121,478 122,500 123,525 124,555 125,590 126,634 127,686 129.5,810 131.2,905 134.2,1050 137.1,1220 140,1358 142,1400 144,1427 145,1440 146,1448 148,1457', '#ff00ff');
p += line('0,341 1,350 2,364 3,401 4,429 5,463 6,500 7,541 8,570 9,579 10,579 11,581 12,577 13,552 14,546 15,543 16,541 17,531 18,519 19,491 20,471 21,459 22,460 23,464 24,462 25,456 26,444 27,425 28,416 29,420 30,430 31,436 33,436 34,443 35,456 36,478 37,493 38,510 39,516 40,509 41,503 42,496 43,486 44,471 45,452 46,434 47,412 48,398 49,404 50,432 51,465 52,499 53,531 54,550 55,579 56,607 57,622 58,641 59,640 60,634 61,627 62,595 63,573 64,556 65,534 66,520 67,510 68,497 69,480 70,472 71,462 72,459 73,461 74,464 75,472 76,480 77,483 78,495 79,508 80,520 81,535 82,548 83,557 84,562 85,568 86,581 87,598 88,602 89,604 90,611 91,618 92,628 93,645 94,653 95,650 96,642 97,636 98,627 99,620 100,612 101,602 102,588 103,572 104,564 105,549 106,535 107,522 108,515 109,506 110,482 111,459 112,436 113,425 114,415 115,407 116,401 117,401 118,404 119,420 120,432 121.6,530 123.5,665 125.5,825 127,990 129,1185 130,1250 133,1365 135,1420 136,1435 138,1443 140,1456 141,1459 144,1459 145,1456 146,1457 147,1461 148,1468', '#ffff00');
p += line('0,353 1,408 2,480 3,540 4,562 5,566 6,580 7,606 8,603 9,598 10,586 11,573 12,538 13,507 14,495 15,503 16,505 17,517 18,517 19,482 20,445 21,412 22,400 23,404 24,429 25,460 26,463 27,440 28,423 29,418 30,409 31,409 32,434 33,440 34,462 35,495 36,535 37,563 38,573 39,558 40,510 41,458 42,420 43,393 44,379 45,381 46,384 47,392 48,399 49,425 50,468 51,532 52,598 53,657 54,667 55,679 56,673 57,652 58,638 59,628 60,596 61,580 62,550 63,523 64,505 65,487 66,468 67,467 68,461 69,449 70,457 71,457 72,454 73,457 74,478 75,490 76,493 77,503 78,525 79,538 80,543 81,567 82,588 83,587 84,585 85,592 86,600 87,608 88,616 89,621 90,628 91,635 92,648 93,668 94,682 95,672 96,650 97,626 98,578 99,555 100,551 101,558 102,557 103,563 104,566 105,552 106,525 107,497 108,475 109,442 110,421 111,397 112,379 113,379 114,390 115,397 116,407 117,417 118,428 119,450 120,462 121.6,690 122.9,825 124,980 125,1125 126,1185 127,1250 128,1315 129,1370 130,1403 131,1410 132,1415 133,1419 134,1430 135,1447 136,1461 137,1470 138,1472 139,1470 140,1464 141,1458 142,1451 143,1449 144,1451 145,1451 146,1460 147,1472 148,1486', '#ffffff');
// event markers: diamonds and stars
[6,7,8,19,26,37,38,43,50,53,68,78,82,83,85,96,100,101,107,114,116,117,121,129,134,138,145].forEach(i => {
  const x = X(i); p += rect(x - 1, 73, 3, 6, '#d0d0d0') + rect(x, 72, 1, 8, '#d0d0d0') + rect(x - 2, 74, 5, 1, '#d0d0d0') + rect(x - 2, 77, 5, 1, '#d0d0d0');
});
[9,21,28,31,41,46,61,62,66,86,90,92,94,99,111,112,124,127,128,131,140,143,146].forEach(i => {
  const x = X(i); p += rect(x - 2, 74, 5, 5, '#d0d0d0') + rect(x, 72, 1, 9, '#d0d0d0') + rect(x - 4, 76, 9, 1, '#d0d0d0')
    + rect(x - 3, 73, 1, 1, '#d0d0d0') + rect(x + 3, 73, 1, 1, '#d0d0d0') + rect(x - 3, 79, 1, 1, '#d0d0d0') + rect(x + 3, 79, 1, 1, '#d0d0d0');
});
p += `<path d="M203 92 216 97M1306 506 1318 510" stroke="#fff"/><path d="M202 91H209L206 95ZM1321 511 1314 511 1316 506Z" fill="#fff"/>
<g font-size="12" fill="#fff"><text x="217" y="101">40.33</text><text x="1268" y="509">14.70</text></g><text x="1080" y="522" font-size="11" font-weight="bold" fill="#ff3a10">Ŝ</text>`;
$('price').innerHTML = p;

const labels = a => `<g font-size="12" fill="#808080" text-anchor="end">${a.map(([t, y]) => `<path d="M1336 ${y - 5.5}h2" stroke="#333"/><text x="1383" y="${y}">${t}</text>`).join('')}</g>`;
// the cursor price tag takes the place of the 38.00 label
$('priceAxis').innerHTML = labels([['40.00', 102], ['36.00', 167], ['34.00', 200], ['32.00', 233], ['30.00', 265], ['28.00', 298], ['26.00', 331], ['24.00', 363], ['22.00', 396], ['20.00', 429], ['18.00', 462], ['16.00', 494]])
  + rect(1337, 118, 50, 16, '#262626') + '<text x="1346" y="131" font-size="12" fill="#b4b4b4">37.64</text>';
$('volAxis').innerHTML = labels([['159.00', 550], ['78.70', 591], ['0.00', 624]]);
$('macdAxis').innerHTML = labels([['2.55', 651], ['-1.29', 693], ['-5.04', 727]]);

const vols = 'c246 r271 c270 c219 r253 r243 c261 c240 c276 r264 r259 c279 r283 r280 c282 c291 r295 r282 r271 r241 c273 c277 c264 c276 r292 c264 r276 r280 r274 c273 c285 r281 c270 r284 c270 c275 c246 r277 r262 r274 r250 r250 c264 r264 c270 r280 r283 c270 r286 c207 c258 c264 c267 c264 r286 c288 r298 r295 c267 r268 r262 c291 r265 c288 r295 r292 r289 c293 r296 r289 c282 r288 c297 c303 c295 c296 r280 c296 c279 r280 r292 c282 r292 r298 c297 c291 c276 r298 r301 r301 c297 c303 c291 c288 r268 r265 c293 r286 r283 c297 c292 r298 c287 r294 r298 r287 r271 r298 c297 r293 c293 r286 c303 c282 r288 r295 r294 c300 c279 c293 r290 c292 c290 r280 c240 c309 c306 c72 c219 r250 c240 r244 c270 c270 c258 c255 r267 c285 r289 c282 c279 r262 c279 r289 c282 r295 c285 c273 r289'.split(' ');
$('vol').innerHTML = grid([544, 585, 625]) + vols.map((s, i) => box(i, 520 + Y(+s.slice(1)), 626, s[0] === 'r')).join('')
  + line('0,247 7,247 9,253 12,259 15,272 17,280 20,276 24,278 28,270 31,277 36,276 39,272 41,266 43,265 46,263 48,268 54,269 57,274 60,278 62,280 67,280 69,288 72,292 77,293 84,289 89,295 91,298 93,294 96,290 99,286 102,287 104,291 119,293 122,290 125,286 126,289 127,264 129,256 131,244 134,244 135,241 136,235 137,253 139,270 142,275 145,278 148,286', '#ff00ff', 520)
  + line('0,243 2,252 5,252 7,246 8,252 10,261 12,273 14,282 16,287 18,286 19,276 20,270 22,265 23,270 24,276 28,276 30,277 36,275 37,270 39,267 41,262 44,258 46,262 48,268 49,264 50,259 53,253 54,262 56,279 57,284 60,285 61,276 62,271 64,277 65,288 67,293 70,292 71,288 72,290 74,295 77,296 79,290 81,286 84,288 85,291 88,294 91,301 93,295 94,290 96,281 98,281 99,286 102,292 104,295 106,289 109,291 119,293 120.6,290 123,283 124,277 125,279 126,285 127,243 128,229 129,232 130,219 131,205 132,243 133,256 135,261 137,268 139,278 142,281 145,281 148,286', '#ffff00', 520);

const hist = '494 504 510 528 528 522 519 516 516 507 492 483 471 463 463 466 463 465 463 450 441 438 447 456 457 463 457 455 453 456 460 460 465 465 477 483 489 492 483 474 468 447 450 444 444 441 444 453 453 468 480 492 501 507 501 495 489 477 474 465 457 453 441 438 435 432 432 435 435 435 444 444 446 450 457 463 463 463 471 474 474 477 477 474 474 471 474 474 474 469 468 468 474 477 471 460 453 450 441 438 438 441 447 447 447 444 435 432 435 432 432 429 429 441 450 453 453 457 465 474 480 528 558 570 579 588 594 591 585 570 555 537 522 507 495 486 474 463 453 444 438 429 423 420 420 417 420 423 423'.split(' ').map(Number);
$('macd').innerHTML = grid([645, 687, 728]) + hist.map((v, i) => v === 460 ? '' : v > 460 ? rect(X(i), 673, 1, 520 + Y(v) - 673, '#00e5ee') : rect(X(i), 520 + Y(v), 1, 674 - 520 - Y(v), '#ff4646')).join('')
  + line('0,394 2,413 3,429 5,443 7,458 9,466 10,465 12,457 14,454 16,457 18,454 19,446 20,439 21,437 24,441 27,440 30,440 32,444 34,452 36,466 37,471 39,471 41,457 43,447 45,443 47,444 49,456 51,473 53,492 55,496 57,493 60,489 61,483 63,468 66,457 69,446 71,447 73,446 75,452 77,457 79,465 82,471 84,474 86,480 87,482 89,480 91,483 93,490 94,490 96,483 97,475 99,464 103,459 105,452 107,441 109,436 111,426 112,422 114,425 116,428 118,431 119,441 120,446 121,475 123,520 125,560 127,597 129,618 130,625 132,626 134,623 136,618 138,607 140,592 142,579 144,566 146,555 148,547', '#ffffff', 520)
  + line('0,376 1,379 3,395 6,421 9,438 12,450 18,455 20,446 23,444 28,444 33,442 35,448 37,457 39,464 41,462 44,452 48,447 50,453 53,466 55,478 57,484 60,486 62,481 64,474 66,466 69,458 71,453 74,451 78,454 81,460 84,467 88,473 91,478 94,484 97,482 100,471 103,465 105,462 108,451 111,439 113,433 116,430 118,431 121,444 123,465 126,510 128,548 130,578 132,596 134,606 137,611 140,604 143,592 146,578 148,566', '#ffff00', 520);

$('dates').innerHTML = [['12', 64], ['02', 440], ['03', 571], ['05', 921], ['06', 1114], ['07', 1289]].map(([t, x]) => `<path d="M${x - 3.500} 731v2" stroke="#444"/><text x="${x}" y="744" font-size="12" fill="#808080">${t}</text>`).join('')
  + '<text x="247" y="744" font-size="12" font-weight="bold" fill="#fff">2018</text>' + rect(716, 731, 80, 18, '#262626') + '<text x="718" y="746" font-size="12" fill="#b4b4b4">2018/03/26/—</text>';
</script>
</body>
</html>
